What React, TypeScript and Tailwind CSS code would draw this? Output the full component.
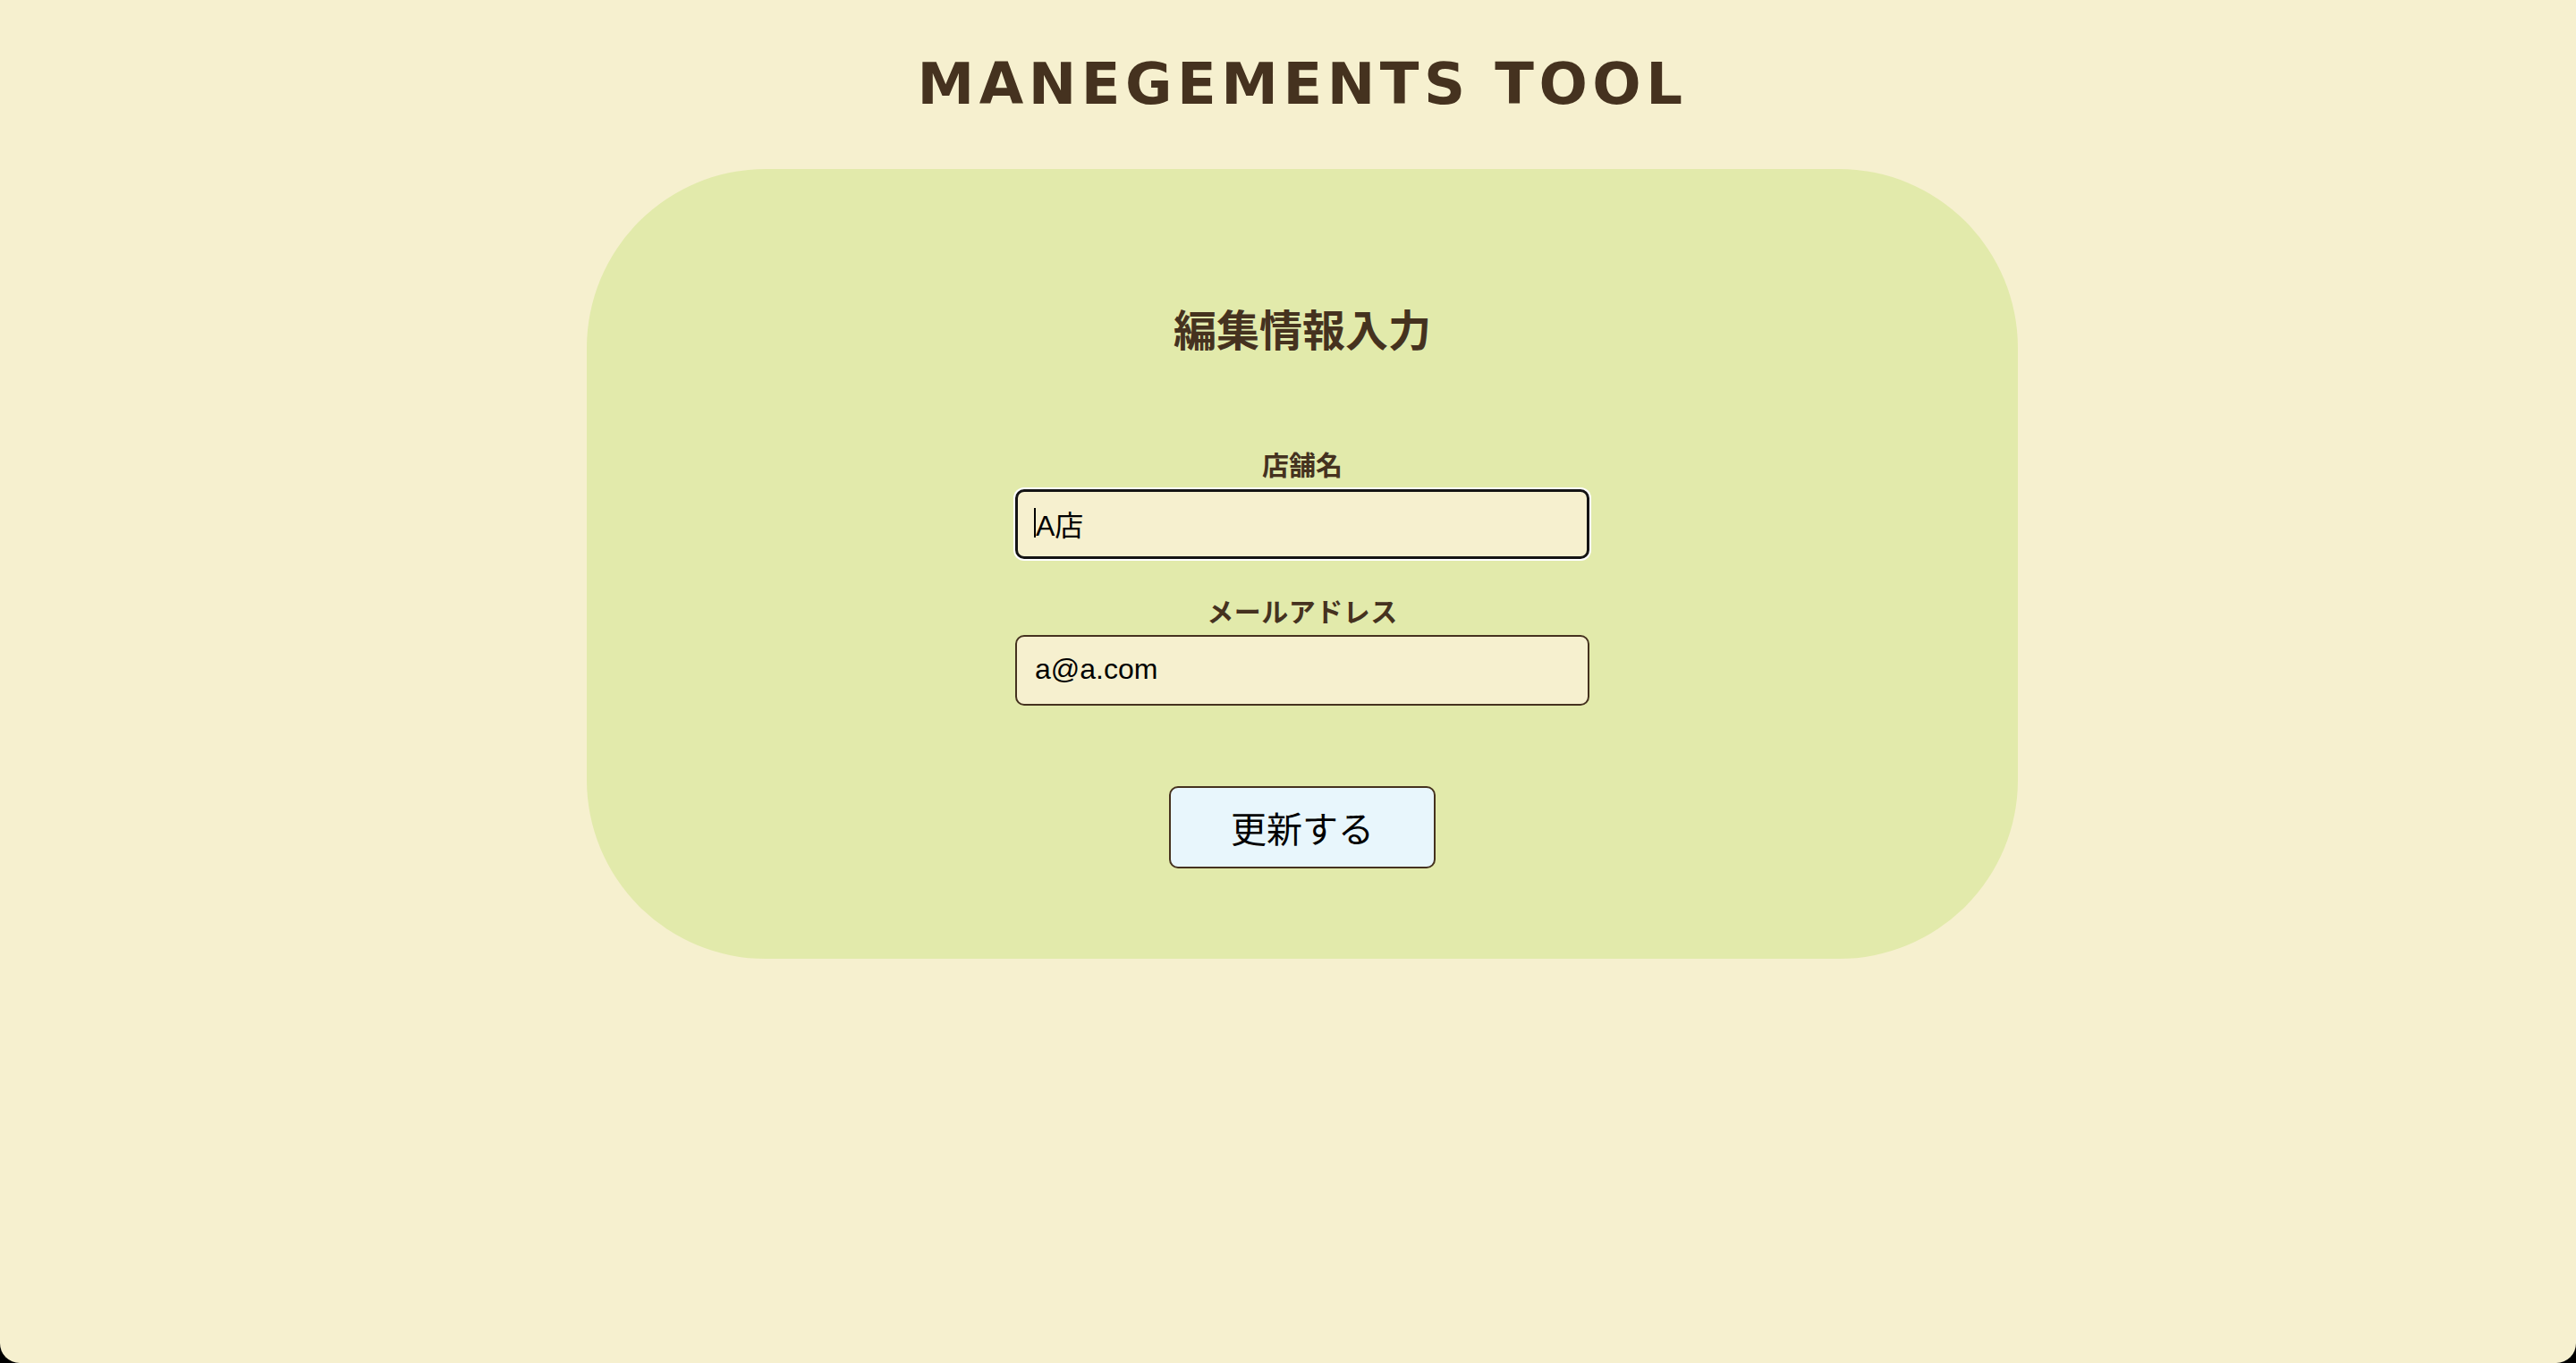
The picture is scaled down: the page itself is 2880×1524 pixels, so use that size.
import React from 'react';

const jp = '"Noto Sans CJK JP", "Noto Sans", sans-serif';

const EditStorePage: React.FC = () => {
  return (
    <div className="bg-black min-h-[1524px]">
      <div className="h-[1524px] bg-[#f6f0cf] rounded-b-[22px] pl-[32px] flex flex-col items-center">
        <h1
          className="pt-[62px] text-[64px] leading-none font-bold tracking-[5.5px] text-[#45321f]"
          style={{ fontFamily: '"DejaVu Sans", Verdana, sans-serif' }}
        >
          MANEGEMENTS TOOL
        </h1>

        <div
          className="mt-[63px] w-[1600px] h-[883px] bg-[#e2eaab] rounded-[200px] flex flex-col items-center pt-[153px]"
          style={{ fontFamily: jp }}
        >
          <h2 className="text-[48px] leading-none font-bold text-[#45321f]">編集情報入力</h2>

          <label className="mt-[113px] text-[30px] leading-none font-bold text-[#45321f]">店舗名</label>
          <div className="relative mt-[14px]">
            <input
              readOnly
              value="A店"
              className="w-[642px] h-[78px] px-[20px] pb-[3px] bg-[#f6f0cf] border-[3px] border-[#141414] rounded-[10px] shadow-[0_0_0_2px_#ffffff] text-[32px] text-black outline-none"
              style={{ fontFamily: '"Liberation Sans", "Noto Sans CJK JP", sans-serif' }}
            />
            <span className="absolute left-[21px] top-[21px] w-[2px] h-[33px] bg-black" />
          </div>

          <label className="mt-[42px] text-[30px] leading-none font-bold text-[#45321f] tracking-[0.5px]">メールアドレス</label>
          <input
            readOnly
            value="a@a.com"
            className="mt-[13px] w-[642px] h-[79px] px-[20px] pb-[3px] bg-[#f6f0cf] border-2 border-[#45321f] rounded-[10px] text-[32px] text-black outline-none"
            style={{ fontFamily: '"Liberation Sans", "Noto Sans CJK JP", sans-serif' }}
          />

          <button className="mt-[90px] w-[298px] h-[92px] bg-[#e8f6fc] border-2 border-[#45321f] rounded-[10px] text-[40px] leading-none text-black">
            更新する
          </button>
        </div>
      </div>
    </div>
  );
};

export default function App() {
  return <EditStorePage />;
}
